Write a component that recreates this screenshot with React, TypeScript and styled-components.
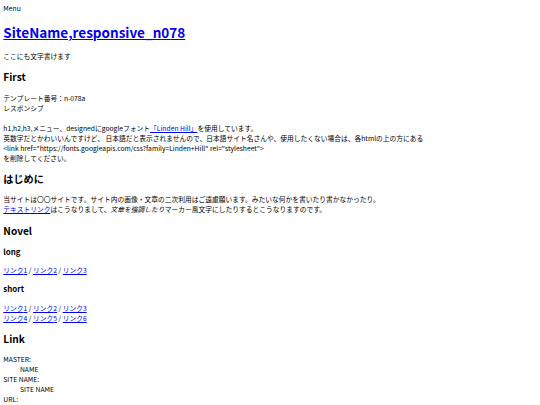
import styled, { createGlobalStyle } from 'styled-components';

// the reference is a default-styled page shown at roughly 540/1296 scale
const GlobalStyle = createGlobalStyle`
  body {
    margin: 3.333px;
    font-family: "Noto Sans CJK JP", "Noto Sans", sans-serif;
    font-size: 6.76px;
    line-height: 10px;
    color: #000;
    background: #fff;
  }
  a {
    color: #0000ee;
  }
`;

const Menu = styled.nav`
  display: block;
`;

const SiteTitle = styled.h1`
  font-size: 13.52px;
  line-height: 20px;
  margin: 8.933px 0;
  font-weight: bold;
`;

const SectionTitle = styled.h2`
  font-size: 10.14px;
  line-height: 15px;
  margin: 8.3px 0;
  font-weight: bold;
`;

const SubTitle = styled.h3`
  font-size: 7.9px;
  line-height: 11.7px;
  margin: 7.8px 0;
  font-weight: bold;
`;

const Text = styled.p`
  margin: 6.667px 0;
`;

const Emphasis = styled.em`
  font-style: italic;
`;

const InfoList = styled.dl`
  margin: 6.667px 0;
`;

const InfoTerm = styled.dt``;

const InfoValue = styled.dd`
  margin-left: 16.667px;
`;

const LinkRow = ({ from, to }: { from: number; to: number }) => {
  const items = [];
  for (let i = from; i <= to; i++) items.push(i);
  return (
    <>
      {items.map((n, i) => (
        <span key={n}>
          <a href="#">リンク{n}</a>
          {i < items.length - 1 && ' / '}
        </span>
      ))}
    </>
  );
};

export default function App() {
  return (
    <>
      <GlobalStyle />
      <Menu>Menu</Menu>
      <SiteTitle>
        <a href="#">SiteName,responsive_n078</a>
      </SiteTitle>
      <Text>ここにも文字書けます</Text>

      <SectionTitle>First</SectionTitle>
      <Text>
        テンプレート番号：n-078a
        <br />
        レスポンシブ
        <br />
        <br />
        h1,h2,h3,メニュー、designedにgoogleフォント<a href="#">「Linden Hill」</a>を使用しています。
        <br />
        英数字だとかわいいんですけど、 日本語だと表示されませんので、日本語サイト名さんや、使用したくない場合は、各htmlの上の方にある
        <br />
        {'<link href="https://fonts.googleapis.com/css?family=Linden+Hill" rel="stylesheet">'}
        <br />
        を削除してください。
      </Text>

      <SectionTitle>はじめに</SectionTitle>
      <Text>
        当サイトは〇〇サイトです。サイト内の画像・文章の二次利用はご遠慮願います。みたいな何かを書いたり書かなかったり。
        <br />
        <a href="#">テキストリンク</a>はこうなりまして、<Emphasis>文章を強調したり</Emphasis>マーカー風文字にしたりするとこうなりますのです。
      </Text>

      <SectionTitle>Novel</SectionTitle>
      <SubTitle>long</SubTitle>
      <Text>
        <LinkRow from={1} to={3} />
      </Text>
      <SubTitle>short</SubTitle>
      <Text>
        <LinkRow from={1} to={3} />
        <br />
        <LinkRow from={4} to={6} />
      </Text>

      <SectionTitle>Link</SectionTitle>
      <InfoList>
        <InfoTerm>MASTER:</InfoTerm>
        <InfoValue>NAME</InfoValue>
        <InfoTerm>SITE NAME:</InfoTerm>
        <InfoValue>SITE NAME</InfoValue>
        <InfoTerm>URL:</InfoTerm>
      </InfoList>
    </>
  );
}
